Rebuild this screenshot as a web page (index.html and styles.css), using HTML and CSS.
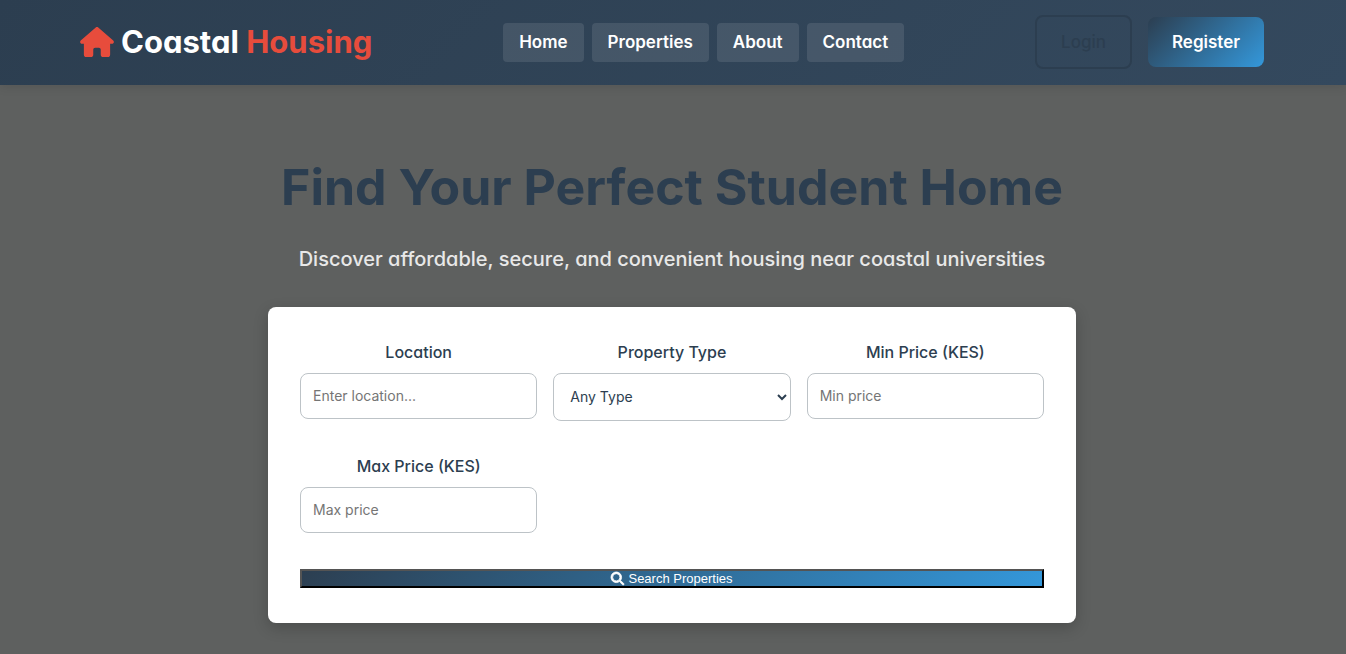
FILE: index.html
```html
<!DOCTYPE html>
<html lang="en">
<head>
<meta charset="utf-8">
<meta name="viewport" content="width=device-width, initial-scale=1">
<title>Coastal Housing</title>
<link rel="stylesheet" href="styles.css">
</head>
<body>
<header class="header">
  <div class="header-inner">
    <a class="logo" href="#">
      <svg class="logo-icon" viewBox="0 0 576 512" aria-hidden="true"><path fill="currentColor" d="M575.8 255.5c0 18-15 32.1-32 32.1h-32l.7 160.2c0 2.7-.2 5.4-.5 8.1V472c0 22.1-17.9 40-40 40H456c-1.1 0-2.2 0-3.3-.1c-1.4 .1-2.8 .1-4.2 .1H416 392c-22.1 0-40-17.9-40-40V448 384c0-17.7-14.3-32-32-32H256c-17.7 0-32 14.3-32 32v64 24c0 22.1-17.9 40-40 40H160 128.1c-1.5 0-3-.1-4.5-.2c-1.2 .1-2.4 .2-3.6 .2H104c-22.1 0-40-17.9-40-40V360c0-.9 0-1.9 .1-2.8V287.6H32c-18 0-32-14-32-32.1c0-9 3-17 10-24L266.4 8c7-7 15-8 22-8s15 2 21 7L564.8 231.5c8 7 12 15 11 24z"/></svg>
      <span>Coastal <span class="logo-accent">Housing</span></span>
    </a>
    <nav class="nav">
      <a class="nav-link" href="#">Home</a>
      <a class="nav-link" href="#">Properties</a>
      <a class="nav-link" href="#">About</a>
      <a class="nav-link" href="#">Contact</a>
    </nav>
    <div class="auth">
      <a class="btn btn-outline" href="#">Login</a>
      <a class="btn btn-primary" href="#">Register</a>
    </div>
  </div>
</header>
<main class="hero">
  <h1 class="hero-title">Find Your Perfect Student Home</h1>
  <p class="hero-text">Discover affordable, secure, and convenient housing near coastal universities</p>
  <form class="search">
    <div class="fields">
      <div class="field">
        <label for="location">Location</label>
        <input class="control" id="location" type="text" placeholder="Enter location...">
      </div>
      <div class="field">
        <label for="type">Property Type</label>
        <select class="control control-select" id="type"><option>Any Type</option></select>
      </div>
      <div class="field">
        <label for="min">Min Price (KES)</label>
        <input class="control" id="min" type="number" placeholder="Min price">
      </div>
      <div class="field">
        <label for="max">Max Price (KES)</label>
        <input class="control" id="max" type="number" placeholder="Max price">
      </div>
    </div>
    <button class="search-button" type="submit">
      <svg class="search-icon" viewBox="0 0 512 512" aria-hidden="true"><path fill="currentColor" stroke="currentColor" stroke-width="32" d="M416 208c0 45.9-14.9 88.3-40 122.7L502.6 457.4c12.5 12.5 12.5 32.8 0 45.3s-32.8 12.5-45.3 0L330.7 376c-34.4 25.2-76.8 40-122.7 40C93.1 416 0 322.9 0 208S93.1 0 208 0S416 93.1 416 208zM208 352a144 144 0 1 0 0-288 144 144 0 1 0 0 288z"/></svg>
      Search Properties
    </button>
  </form>
</main>
</body>
</html>
```
FILE: styles.css
```css
:root {
  --navy: #2c3e50;
  --slate: #34495e;
  --blue: #3498db;
  --red: #e74c3c;
}

* {
  box-sizing: border-box;
  margin: 0;
}

body {
  min-height: 100vh;
  display: flex;
  flex-direction: column;
  background: #5e605f;
  color: var(--navy);
  font-family: Inter, "Open Sans", sans-serif;
  font-feature-settings: "cv11";
  font-size: 16px;
  line-height: 26px;
}

a {
  text-decoration: none;
}

.header {
  padding: 15px 18px 16px 16px;
  background: linear-gradient(135deg, var(--navy), var(--slate));
  box-shadow: 0 2px 10px rgba(0, 0, 0, 0.1);
}

.header-inner {
  max-width: 1184px;
  margin: 0 auto;
  display: flex;
  align-items: center;
  justify-content: space-between;
}

.logo {
  display: flex;
  align-items: center;
  gap: 7px;
  color: #fff;
  font-size: 31px;
  font-weight: 700;
}

.logo-icon {
  width: 34px;
  height: 30px;
  color: var(--red);
}

.logo-accent {
  color: var(--red);
}

.nav {
  display: flex;
  gap: 8px;
}

.nav-link {
  padding: 8px 16px;
  border-radius: 4px;
  background: rgba(255, 255, 255, 0.1);
  color: #fff;
  font-size: 17px;
  font-weight: 600;
  line-height: 23px;
}

.auth {
  display: flex;
  align-items: center;
  gap: 16px;
}

.btn {
  padding: 12px 24px;
  border-radius: 8px;
  font-size: 17px;
  font-weight: 600;
}

.btn-outline {
  border: 2px solid var(--navy);
  color: var(--navy);
  font-weight: 500;
}

.btn-primary {
  background: linear-gradient(135deg, var(--navy), var(--blue));
  color: #fff;
}

.hero {
  flex: 1;
  display: flex;
  flex-direction: column;
  align-items: center;
  padding: 64px 18px 31px 16px;
  text-align: center;
}

.hero-title {
  margin-bottom: 17px;
  font-size: 50px;
  font-weight: 700;
  line-height: 77px;
}

.hero-text {
  margin-bottom: 32px;
  color: #e8e8e8;
  font-size: 20px;
  font-weight: 500;
  line-height: 32px;
}

.search {
  width: 100%;
  max-width: 808px;
  padding: 32px 32px 35px;
  border-radius: 8px;
  background: #fff;
  box-shadow: 0 5px 15px rgba(0, 0, 0, 0.2);
}

.fields {
  display: grid;
  grid-template-columns: repeat(3, 1fr);
  gap: 32px 16px;
  margin-bottom: 36px;
}

.field {
  display: flex;
  flex-direction: column;
  gap: 8px;
}

.field label {
  font-weight: 500;
}

.control {
  width: 100%;
  height: 46px;
  padding: 11px 12px 13px;
  border: 1px solid #bdc3c7;
  border-radius: 8px;
  background: #fff;
  color: var(--navy);
  font-family: inherit;
  font-size: 14px;
}

.control::placeholder {
  color: #757575;
}

.control-select {
  height: 48px;
}

.search-button {
  width: 100%;
  display: flex;
  align-items: center;
  justify-content: center;
  gap: 4px;
  padding: 0;
  border: 2px outset #000;
  background: linear-gradient(135deg, var(--navy), var(--blue)) border-box;
  color: #fff;
  font-family: "Liberation Sans", Arial, sans-serif;
  font-size: 13px;
  line-height: 15px;
}

.search-icon {
  width: 13px;
  height: 13px;
  overflow: visible;
}

@media (max-width: 900px) {
  .header-inner {
    flex-wrap: wrap;
    justify-content: center;
    gap: 16px;
  }

  .fields {
    grid-template-columns: repeat(auto-fit, minmax(200px, 1fr));
  }
}
```
